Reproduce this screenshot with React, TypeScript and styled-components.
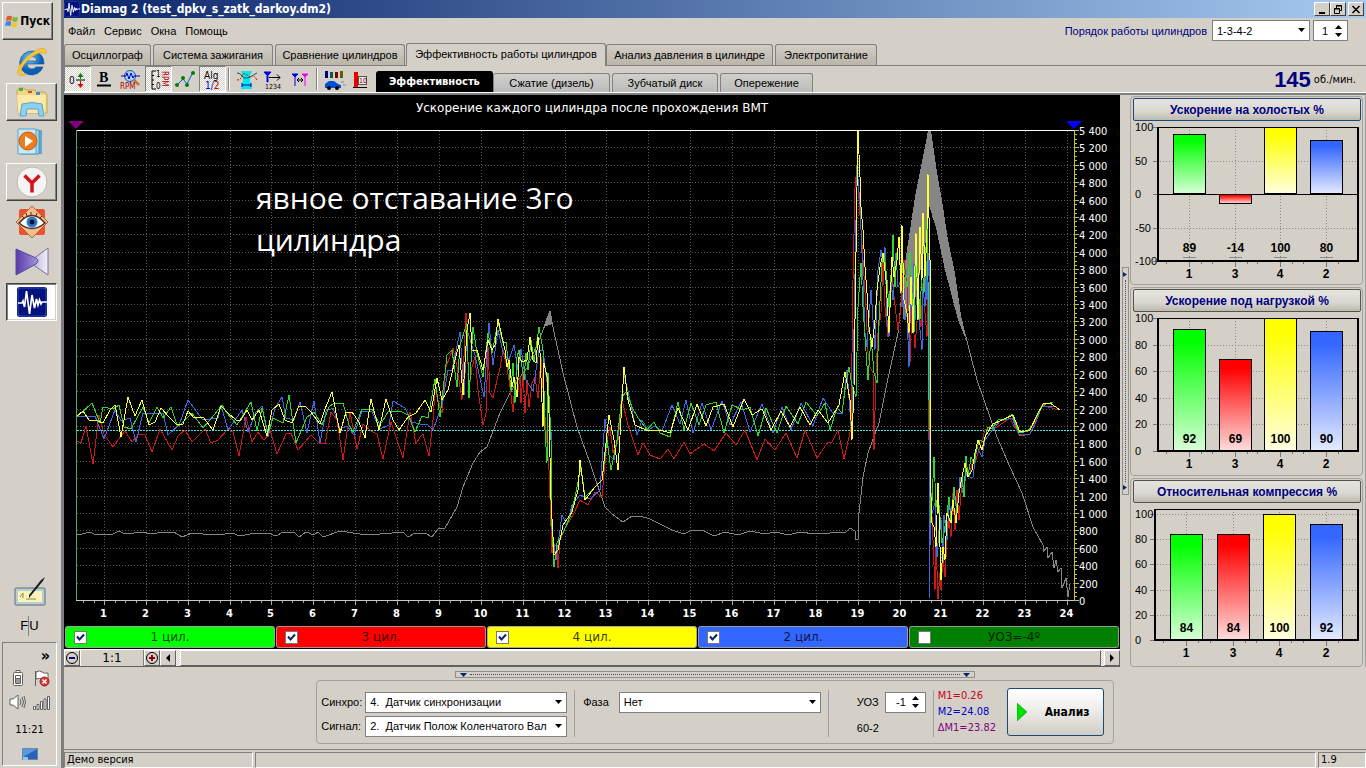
import React, { useState } from "react";
import styled, { createGlobalStyle, css } from "styled-components";

const face = "#d4d0c8";
const ui = `"DejaVu Sans Condensed", "DejaVu Sans", sans-serif`;
const wide = `"DejaVu Sans", sans-serif`;
const arial = `"Liberation Sans", sans-serif`;

const Global = createGlobalStyle`
  * { box-sizing: border-box; }
  html, body { margin: 0; padding: 0; background: ${face}; }
  body { font: 11px/14px ${arial}; color: #000; }
  button, input, select { font: inherit; color: inherit; margin: 0; }
`;

const Desktop = styled.div`
  display: grid;
  grid-template-columns: 64px minmax(0, 1fr);
  min-height: 100vh;
  background: ${face};
`;

/* ---------- task bar ---------- */
const TaskBar = styled.aside`
  display: flex;
  flex-direction: column;
  padding: 2px 4px 2px 2px;
  border-right: 3px solid #7d7d80;
`;
const StartButton = styled.button`
  display: flex;
  align-items: center;
  gap: 1px;
  width: 51px;
  height: 38px;
  padding: 0 2px;
  background: ${face};
  border: 1px solid;
  border-color: #fff #404040 #404040 #fff;
  box-shadow: inset -1px -1px #808080;
  font: bold 12px/14px ${ui};
`;
const TaskList = styled.div`
  display: flex;
  flex-direction: column;
  gap: 2px;
  margin: 3px 0 auto 4px;
`;
const TaskButton = styled.button<{ $look?: "up" | "down" }>`
  display: grid;
  place-items: center;
  height: 38px;
  padding: 0;
  background: ${(p) => (p.$look === "down" ? "#fff" : "none")};
  border: 1px solid transparent;
  ${(p) => p.$look === "up" && css`border-color: #fff #404040 #404040 #fff; box-shadow: inset -1px -1px #808080;`}
  ${(p) => p.$look === "down" && css`border-color: #404040 #fff #fff #404040; box-shadow: inset 1px 1px #808080, inset -1px -1px ${face};`}
`;
const PenBlock = styled.div`
  display: flex;
  flex-direction: column;
  align-items: center;
  gap: 9px;
  padding-bottom: 6px;
`;
const Lang = styled.span`
  height: 20px;
  font: 13px/20px ${arial};
  i { display: inline-block; width: 1px; height: 20px; background: #808080; vertical-align: top; }
`;
const Tray = styled.div`
  display: flex;
  flex-direction: column;
  align-items: center;
  height: 124px;
  padding: 4px 6px;
  border: 1px solid;
  border-color: #808080 #fff #fff #808080;
`;
const More = styled.button`
  align-self: flex-end;
  height: 18px;
  padding: 0;
  border: 0;
  background: none;
  font: bold 16px/16px ${ui};
`;
const TrayIcons = styled.div`
  display: grid;
  grid-template-columns: 18px 18px;
  gap: 6px 5px;
  margin-top: 4px;
`;
const Clock = styled.time`
  margin: 12px 0 11px;
  font: 11px/14px ${ui};
`;

/* ---------- window frame ---------- */
const Win = styled.main`
  display: flex;
  flex-direction: column;
  min-width: 0;
`;
const TitleBar = styled.header`
  display: flex;
  align-items: center;
  height: 18px;
  padding-right: 2px;
  background: linear-gradient(90deg, #0a246a, #a6caf0);
  color: #fff;
`;
const Title = styled.h1`
  flex: 1;
  margin: 0 0 0 1px;
  font: bold 12px/18px ${ui};
`;
const CaptionButton = styled.button<{ $gap?: boolean }>`
  display: grid;
  place-items: center;
  width: 16px;
  height: 14px;
  margin-left: ${(p) => (p.$gap ? 2 : 0)}px;
  padding: 0;
  background: ${face};
  border: 1px solid;
  border-color: #fff #404040 #404040 #fff;
`;
const MenuRow = styled.div`
  display: flex;
  align-items: center;
  height: 25px;
  padding: 0 18px 0 4px;
`;
const MenuItem = styled.button`
  padding: 0;
  margin-right: 9px;
  border: 0;
  background: none;
`;
const OrderLabel = styled.label`
  margin: 0 5px 0 auto;
  color: #000080;
`;

/* ---------- fields ---------- */
const SelectBox = styled.span<{ $w: number }>`
  position: relative;
  display: block;
  width: ${(p) => p.$w}px;
  height: 21px;
  svg { position: absolute; right: 5px; top: 8px; pointer-events: none; }
  select {
    width: 100%;
    height: 100%;
    padding: 0 16px 0 4px;
    appearance: none;
    border: 1px solid #808080;
    border-radius: 0;
    background: #fff;
  }
`;
const Spin = styled.span<{ $w: number }>`
  display: flex;
  width: ${(p) => p.$w}px;
  height: 21px;
  margin-left: 3px;
  background: #fff;
  border: 1px solid #808080;
  input {
    flex: 1;
    min-width: 0;
    padding: 0 1px;
    border: 0;
    background: none;
    text-align: right;
  }
`;
const SpinArrows = styled.span`
  display: flex;
  flex-direction: column;
  justify-content: center;
  gap: 4px;
  width: 18px;
  button { display: grid; place-items: center; height: 4px; padding: 0; border: 0; background: none; }
`;

/* ---------- tabs and tool bar ---------- */
const TabRow = styled.nav`
  display: flex;
  align-items: flex-end;
  gap: 2px;
  height: 23px;
  border-bottom: 1px solid #808080;
`;
const Tab = styled.button<{ $w: number; $on?: boolean }>`
  width: ${(p) => p.$w}px;
  height: ${(p) => (p.$on ? 23 : 21)}px;
  margin: ${(p) => (p.$on ? "0 -2px -1px -1px" : "0")};
  padding: ${(p) => (p.$on ? "0 0 2px" : "0")};
  border: 1px solid #808080;
  border-bottom: 0;
  border-radius: 3px 3px 0 0;
  background: ${(p) => (p.$on ? face : "linear-gradient(#d2cec6, #b9b5a9)")};
  white-space: nowrap;
`;
const ToolRow = styled.div`
  display: flex;
  height: 29px;
  border-bottom: 2px solid #808080;
  box-shadow: inset 0 -1px #fff;
`;
const Tool = styled.button<{ $on?: boolean }>`
  display: grid;
  place-items: center;
  width: 27px;
  height: 26px;
  padding: 0;
  border: 1px solid transparent;
  background: none;
  ${(p) =>
    p.$on &&
    css`
      border-color: #808080 #fff #fff #808080;
      background: repeating-conic-gradient(#fff 0 25%, ${face} 0 50%) 0 0 / 2px 2px;
    `}
`;
const Sep = styled.span`
  width: 1px;
  height: 22px;
  margin: 2px 3px;
  background: #fff;
  box-shadow: -1px 0 #808080;
`;
const SubTabs = styled.nav`
  display: flex;
  align-items: flex-end;
  gap: 2px;
  height: 26px;
  margin-left: 1px;
`;
const SubTab = styled.button<{ $w: number; $on?: boolean }>`
  width: ${(p) => p.$w}px;
  height: ${(p) => (p.$on ? 21 : 19)}px;
  margin-right: ${(p) => (p.$on ? -2 : 0)}px;
  padding: 0;
  border: 1px solid ${(p) => (p.$on ? "#000" : "#808080")};
  border-bottom: 0;
  border-radius: 3px 3px 0 0;
  background: ${(p) => (p.$on ? "#000" : "linear-gradient(#d0cfcc, #bcbcba)")};
  color: ${(p) => (p.$on ? "#fff" : "#000")};
  font: ${(p) => (p.$on ? `bold 11px/14px ${ui}` : `11px/14px ${arial}`)};
  white-space: nowrap;
`;
const Rpm = styled.p`
  display: flex;
  align-items: center;
  gap: 3px;
  margin: 0 10px 0 auto;
  font: 11px/28px ${ui};
  b { color: #000080; font: bold 22px/28px ${arial}; }
`;

/* ---------- work area ---------- */
const Work = styled.div`
  display: grid;
  grid-template-columns: minmax(0, 1fr) 10px 236px;
`;
const ScopeColumn = styled.section`
  display: flex;
  flex-direction: column;
  background: #000;
  svg.scope { display: block; width: 100%; height: auto; }
`;
const Legend = styled.div`
  display: grid;
  grid-template-columns: repeat(5, 1fr);
  gap: 1px;
  padding: 1px;
`;
const LegendItem = styled.label<{ $color: string }>`
  display: grid;
  grid-template-columns: 15px 1fr 15px;
  align-items: center;
  height: 22px;
  padding: 0 8px;
  border: 1px solid rgba(160, 160, 160, 0.9);
  border-radius: 3px;
  background: ${(p) => p.$color};
  color: rgba(0, 0, 0, 0.8);
  font: 12px/16px ${wide};
  text-align: center;
`;
const CheckWrap = styled.span`
  position: relative;
  width: 13px;
  height: 13px;
  input { display: block; width: 13px; height: 13px; appearance: none; background: #fff; border: 1px solid #777; }
  svg { position: absolute; left: 2px; top: 2px; pointer-events: none; display: none; }
  input:checked + svg { display: block; }
`;
const ZoomRow = styled.div`
  display: flex;
  height: 18px;
  background: ${face};
  border-top: 1px solid #fff;
  border-bottom: 1px solid #606060;
`;
const SmallButton = styled.button`
  display: grid;
  place-items: center;
  width: 16px;
  padding: 0;
  background: ${face};
  border: 1px solid;
  border-color: #fff #606060 #606060 #fff;
`;
const Ratio = styled.output`
  width: 64px;
  border-left: 1px solid #fff;
  border-right: 1px solid #808080;
  font: 12px/17px ${wide};
  text-align: center;
`;
const Track = styled.div`
  flex: 1;
  padding: 0 3px 0 4px;
  background: repeating-conic-gradient(#fff 0 25%, ${face} 0 50%) 0 0 / 2px 2px;
`;
const Thumb = styled.div`
  height: 100%;
  background: ${face};
  border: 1px solid;
  border-color: #fff #606060 #606060 #fff;
`;
const Gutter = styled.div`
  display: flex;
  justify-content: center;
  align-items: center;
`;
const Grip = styled.button<{ $flat?: boolean }>`
  display: flex;
  flex-direction: ${(p) => (p.$flat ? "row" : "column")};
  align-items: center;
  width: ${(p) => (p.$flat ? "40%" : "7px")};
  height: ${(p) => (p.$flat ? "7px" : "228px")};
  padding: ${(p) => (p.$flat ? "0 4px" : "4px 0")};
  border: 1px solid #909090;
  background: ${face};
  svg { fill: #0a246a; }
`;
const Dots = styled.i<{ $flat?: boolean }>`
  flex: 1;
  margin: 3px;
  border: 0 dotted #444a66;
  border-width: ${(p) => (p.$flat ? "1px 0 0" : "0 0 0 1px")};
`;
const Panels = styled.aside`
  display: flex;
  flex-direction: column;
  gap: 2px;
  padding: 1px 2px 0 0;
  border-right: 1px solid #a0a0a0;
`;
const Panel = styled.section`
  height: 189px;
  padding: 1px 1px 0 2px;
  border: 1px solid #a5a29b;
  border-radius: 4px;
  svg { display: block; width: 100%; height: 160px; }
`;
const PanelButton = styled.button<{ $focus?: boolean }>`
  display: block;
  width: 100%;
  height: 23px;
  padding: 0;
  border: 1px solid ${(p) => (p.$focus ? "#1c4a78" : "#55534c")};
  border-radius: 2px;
  background: linear-gradient(#e6e4df, #dad7d0 60%, #bdbab0);
  color: #000080;
  font: bold 12px/14px ${arial};
`;

/* ---------- bottom ---------- */
const Bottom = styled.section`
  display: flex;
  flex-direction: column;
  align-items: center;
  flex: 1;
  padding: 4px 0 5px;
  border-bottom: 1px solid #808080;
`;
const Setup = styled.form`
  display: flex;
  align-items: stretch;
  height: 64px;
  margin: 2px 0 0;
  padding: 6px 9px 6px 4px;
  border: 1px solid #a5a29b;
  border-radius: 4px;
`;
const Fields = styled.div`
  display: grid;
  grid-template-columns: 42px auto;
  gap: 3px 2px;
  align-items: center;
  align-content: center;
  padding-top: 4px;
`;
const Rule = styled.span`
  width: 1px;
  margin: 3px 4px 0 7px;
  background: #a0a0a0;
`;
const Phase = styled.div`
  display: flex;
  align-items: center;
  gap: 10px;
  height: 30px;
  margin-left: 4px;
`;
const Angle = styled.div`
  display: grid;
  grid-template-columns: 25px 44px;
  grid-template-rows: 30px 22px;
  align-items: center;
  margin-left: 24px;
`;
const Marks = styled.div`
  width: 62px;
  padding-top: 1px;
  font: 11px/16px ${ui};
  white-space: nowrap;
`;
const Mark = styled.div<{ $c: string }>`
  color: ${(p) => p.$c};
`;
const Analyse = styled.button`
  display: flex;
  align-items: center;
  gap: 18px;
  width: 97px;
  height: 48px;
  margin: 1px 0 0 7px;
  padding: 0 9px;
  border: 1px solid #1c4a78;
  border-radius: 3px;
  background: linear-gradient(#fff, #f1efec 40%, #d0cdc5);
  font: bold 12px/14px ${ui};
`;
const Status = styled.footer`
  display: grid;
  grid-template-columns: 189px 1fr 48px;
  gap: 2px;
  height: 18px;
  padding-top: 2px;
  font: 11px/14px ${ui};
  span { padding-left: 2px; border: 1px solid; border-color: #808080 #fff #fff #808080; }
`;

/* ---------- small glyphs ---------- */
const Down = () => (
  <svg width="7" height="4" viewBox="0 0 7 4"><path d="M0 0h7L3.500 4z" /></svg>
);
const Up = () => (
  <svg width="7" height="4" viewBox="0 0 7 4"><path d="M0 4h7L3.500 0z" /></svg>
);
const Tick = () => (
  <svg width="9" height="9" viewBox="0 0 9 9"><path d="M1 3.500l2.500 3L8 1.500" fill="none" stroke="#0a246a" strokeWidth="2" /></svg>
);
const WaveLogo = ({ size }: { size: number }) => (
  <svg width={size} height={size} viewBox="0 0 30 30">
    <rect width="30" height="30" rx="3" fill="#05127e" />
    <rect x="1" y="1" width="28" height="28" rx="3" fill="none" stroke="#2b4fb4" />
    <path d="M1 16h4l1-2 1.500 6 2-16 3 23 2.500-19 2.500 13 2-9 1.500 6 1.500-5 1.500 4 1-2h5" fill="none" stroke="#fff" strokeWidth="1.700" />
  </svg>
);

function TaskIcon({ name }: { name: string }) {
  switch (name) {
    case "ie":
      return (
        <svg width="34" height="32" viewBox="0 0 34 32">
          <defs><radialGradient id="ie" cx=".4" cy=".3"><stop offset="0" stopColor="#6fd0ff" /><stop offset="1" stopColor="#0a5fb4" /></radialGradient></defs>
          <path d="M17 5a12 12 0 1 0 11 16h-7a5 5 0 0 1-9-3h17c0-8-5-13-12-13zm-5 10c1-6 9-6 10 0z" fill="url(#ie)" stroke="#0a4c92" strokeWidth=".6" />
          <path d="M31 8c2-5-3-8-11-3C8 12-1 25 4 29c3 2 8-1 8-1-5 1-7-1-5-6C11 14 24 3 31 8z" fill="#f5c63a" stroke="#d79a1c" strokeWidth=".5" />
        </svg>
      );
    case "folder":
      return (
        <svg width="34" height="30" viewBox="0 0 34 30">
          <path d="M2 4l2-3h5l2 2h9l1 2h9l2 3v18H3z" fill="#f2d880" stroke="#c8a548" />
          <path d="M4 1h4v3H4z" fill="#43b04a" /><path d="M13 4h4v2h-4z" fill="#c84a3a" /><path d="M21 5h4v3h-4z" fill="#4a86d8" />
          <path d="M2 8h29l-1 18H3z" fill="#fbe9a8" />
          <path d="M5 29l2-12q10-3 20 0l2 12h-5l-1-7H12l-1 7z" fill="#8fd0ee" stroke="#5ba4d4" />
        </svg>
      );
    case "media":
      return (
        <svg width="30" height="28" viewBox="0 0 30 28">
          <path d="M7 2h18v24H7z" fill="#5fa9cf" /><path d="M4 2h18v24H4z" fill="#a7d9ee" stroke="#4c93bb" />
          <path d="M1 1h18v25H1z" fill="#c7e9f6" stroke="#5aa2c8" />
          <circle cx="11" cy="13" r="9" fill="#ee7c1f" stroke="#c85a10" /><path d="M8 8l8 5-8 6z" fill="#fff" />
        </svg>
      );
    case "yandex":
      return (
        <svg width="32" height="32" viewBox="0 0 32 32">
          <circle cx="16" cy="16" r="15" fill="#f4f4f4" stroke="#b8b8b8" />
          <path d="M8.500 9.500L16 17m7.500-7.500L16 17v9.500" stroke="#d8121c" strokeWidth="3.500" fill="none" />
        </svg>
      );
    case "eye":
      return (
        <svg width="34" height="34" viewBox="0 0 34 34">
          <rect x="4" y="4" width="26" height="26" rx="2" fill="#f0502c" />
          <path d="M17 1l16 16-16 16L1 17z" fill="#f0bd8e" stroke="#a8643c" />
          <path d="M4 18q13-15 26 0-13 11-26 0z" fill="#fff" stroke="#5c2c14" strokeWidth="1.500" />
          <circle cx="17" cy="17" r="5.500" fill="#2a7ad0" /><circle cx="17" cy="17" r="2.500" fill="#051428" />
          <path d="M7 11l2 2m2-5l1 3m4-4v3m6-2l-1 3m6 0l-2 2" stroke="#5c2c14" />
        </svg>
      );
    case "kite":
      return (
        <svg width="34" height="30" viewBox="0 0 34 30">
          <defs>
            <linearGradient id="k1"><stop offset="0" stopColor="#5a3aa8" /><stop offset="1" stopColor="#a394dc" /></linearGradient>
            <linearGradient id="k2"><stop offset="0" stopColor="#b4a8d4" /><stop offset="1" stopColor="#f2f0f8" /></linearGradient>
          </defs>
          <path d="M33 1v27L14 15z" fill="url(#k2)" stroke="#7a70a0" /><path d="M1 2l20 9q4 3 0 6L1 28z" fill="url(#k1)" stroke="#5a48a0" />
        </svg>
      );
    case "pen":
      return (
        <svg width="32" height="30" viewBox="0 0 32 30">
          <rect x="1" y="11" width="30" height="17" rx="1" fill="#b9cdd2" stroke="#5b7078" /><rect x="4" y="14" width="24" height="11" fill="#fbf3b8" />
          <path d="M6 20l3-4v5m3 1h10" stroke="#884" fill="none" /><path d="M15 21L29 4l2-4-4 3-12 15z" fill="#1c2228" />
        </svg>
      );
    default:
      return <WaveLogo size={30} />;
  }
}

const WinFlag = () => (
  <svg width="16" height="15" viewBox="0 0 16 15">
    <path d="M2 2q3-2 6 0L7 7Q4 5 1 7z" fill="#e8582a" /><path d="M9 2q3 2 6 0l-1 5q-3 2-6 0z" fill="#7cb93c" />
    <path d="M1 8q3-2 6 0l-1 5q-3-2-6 0z" fill="#3e86d8" /><path d="M8 8q3 2 6 0l-1 5q-3 2-6 0z" fill="#f5c42c" />
  </svg>
);

const TrayGlyph = ({ name }: { name: string }) => (
  <svg width="18" height="18" viewBox="0 0 18 18" fill="none" stroke="#606060">
    {name === "battery" && <><rect x="4.500" y="3.500" width="9" height="13" rx="1" fill="#fff" /><path d="M7 1.500h4v2H7z" fill="#fff" /><path d="M6.500 6.500h5v3h-5z" fill="#fff" /><path d="M6.500 9.500h5v5h-5z" fill="#999" /></>}
    {name === "flag" && <><path d="M3.500 2v15M4 3q4-2 6 0t6 1v7q-4 0-6-1t-6 0z" fill="#fff" /><circle cx="12.500" cy="12.500" r="4.500" fill="#d83a34" stroke="#a02020" /><path d="M10.500 10.500l4 4m0-4l-4 4" stroke="#fff" strokeWidth="1.500" /></>}
    {name === "sound" && <><path d="M1 6h3l5-4v14l-5-4H1z" fill="#fff" /><path d="M11 6q2 3 0 6m2-8q3 5 0 10m2-11q3 6 0 12" /></>}
    {name === "net" && <path d="M1.500 13.500h2v3h-2zM5 11.500h2v5H5zM8.500 8.500h2v8h-2zM12 6h2v10.500h-2zM15.500 3.500h2v13h-2z" fill="#fff" />}
  </svg>
);

function ToolIcon({ n }: { n: number }) {
  const t = { fontFamily: "DejaVu Sans Condensed, DejaVu Sans, sans-serif" };
  return (
    <svg width="25" height="24" viewBox="0 -1 25 24" style={t}>
      {n === 0 && <><text x="4" y="16" fontSize="10">0</text><path d="M11 12h9" stroke="#000" /><path d="M15.500 5l3 4h-6zM15 8h1v3h-1z" fill="#008000" /><path d="M15.500 20l3-4h-6zM15 13h1v3h-1z" fill="#e00000" /></>}
      {n === 1 && <><text x="7" y="14" fontSize="14" fontWeight="bold" fontFamily="Liberation Serif">B</text><path d="M5 17.500h14" stroke="#000" strokeWidth="2" /></>}
      {n === 2 && <><circle cx="11" cy="8" r="5.500" fill="#9fd4f4" stroke="#2850a0" /><path d="M2 8h5l1-3 2 6 2-6 2 5 1-2h6" fill="none" stroke="#0000c0" /><path d="M15 12l5 5" stroke="#b08030" strokeWidth="2.500" /><text x="1" y="21" fontSize="8" fill="#b00000">RPM</text></>}
      {n === 3 && <><path d="M10 3H6v18h4M6 7.500h2M6 12h2M6 16.500h2" fill="none" stroke="#000" /><text x="10" y="9" fontSize="8">1</text><text x="10" y="21" fontSize="8">0</text><text transform="translate(16 3) rotate(90)" fontSize="8" fill="#b00000">RPM</text></>}
      {n === 4 && <><path d="M4 17l6-6 4 5 5-10" fill="none" stroke="#0060c0" /><g fill="#008000"><circle cx="4" cy="17" r="2" /><circle cx="10" cy="10" r="2" /><circle cx="14" cy="17" r="2" /><circle cx="20" cy="5" r="2" /></g></>}
      {n === 5 && <><text x="4" y="11" fontSize="10">Alg</text><text x="5" y="21" fontSize="10" fill="#0000c0">1/<tspan fill="#d00000">2</tspan></text></>}
      {n === 6 && <><path d="M7 3h11l-2 5v5l2 8H7l2-8V8z" fill="#00e8e8" /><path d="M3 5q4 0 5 3t5 2 5-2 5-3" fill="none" stroke="#006060" /><path d="M3 12q4 0 5-4t5-1 5 1 5 4" fill="none" stroke="#e00000" strokeDasharray="2 1" /><path d="M8 17h9m-9-2v4m9-4v4" stroke="#0000c0" /></>}
      {n === 7 && <><path d="M3 4h7L6.500 8zM6 8h1v6H6z" fill="#0000e0" stroke="#0000e0" /><path d="M8 9.500h11m-3-3l3 3-3 3" fill="none" stroke="#000" /><text x="4" y="21" fontSize="7">1234</text></>}
      {n === 8 && <><path d="M4 6h6L7 9zM7 9v9" fill="#0000e0" stroke="#0000e0" /><path d="M14 6h6l-3 3zM17 9v9" fill="#f000f0" stroke="#f000f0" /><path d="M9 12h6m-4-2l-2 2 2 2m2-4l2 2-2 2" fill="none" stroke="#000" /></>}
      {n === 9 && <><path d="M3 3h3v7H3z" fill="#000080" /><path d="M8 4h3v6H8z" fill="#006040" /><path d="M13 4h3v6h-3z" fill="#800000" /><path d="M18 3h3v7h-3z" fill="#606000" /><path d="M3 16l4-3h5l4 3 3 1v3H3z" fill="#0050d8" /><circle cx="7" cy="20" r="2" /><circle cx="15" cy="20" r="2" /><path d="M19 14h3m-1 3h3" stroke="#888" /></>}
      {n === 10 && <><path d="M5 4h4v15H5z" fill="#e80000" /><rect x="9.500" y="8.500" width="8" height="8" fill="#eee" stroke="#555" /><path d="M4 19.500h14" stroke="#000" /><text x="10" y="15" fontSize="7" fill="#700">10</text></>}
    </svg>
  );
}

/* ---------- scope ---------- */
const GREEN =
  "77,417 92,403 100,423 103,407 113,409 119,405 124,427 131,429 143,407 149,423 157,407 163,418 171,407 177,425 180,425 192,413 203,428 210,420 222,405 227,413 237,425 251,402 257,431 262,408 268,433 273,418 283,423 289,395 296,443 307,417 314,412 322,425 329,407 334,403 343,403 349,425 353,432 362,409 372,409 380,425 388,412 400,411 408,415 415,432 422,416 428,418 435,379 440,417 447,355 452,350 457,387 460,345 467,323 469,398 473,327 477,353 483,377 488,333 492,353 498,322 503,343 506,342 508,360 511,390 513,363 515,403 517,357 519,350 522,367 524,380 526,353 528,370 531,340 534,362 539,327 543,350 545,430 547,463 548,373 551,440 552,527 554,567 557,543 563,533 570,517 575,497 581,467 585,497 595,487 602,480 607,440 611,470 617,440 622,397 626,392 632,407 638,418 647,430 654,422 660,433 670,437 678,402 684,430 691,403 699,425 706,405 716,402 724,433 732,405 743,410 750,407 758,436 766,408 777,433 786,406 798,424 806,402 817,416 825,403 830,430 837,408 842,413 846,383 849,367 852,386 856,397 858,307 861,263 863,307 865,337 868,380 871,337 874,373 877,383 879,320 882,263 884,253 887,280 889,307 892,260 893,235 895,287 897,253 899,243 901,283 903,263 907,287 910,253 912,293 914,333 916,250 918,277 920,320 922,263 924,293 926,247 927,220 928,280 929,400 930,430 931,523 934,457 936,507 938,493 940,517 942,543 944,533 947,513 949,497 951,523 954,487 957,513 959,493 962,477 964,497 966,456 968,477 971,457 974,463 977,447 980,440 984,442 988,427 992,429 998,420 1006,419 1012,414 1019,433 1028,431 1034,422 1043,405 1053,402";
const RED =
  "77,441 81,443 86,426 93,464 99,415 104,434 113,447 125,431 132,442 139,434 145,435 152,452 160,429 172,450 178,436 185,430 192,442 205,429 211,443 218,440 228,429 233,432 239,456 246,417 252,442 258,432 264,440 268,435 270,430 277,454 286,434 291,433 298,450 311,435 319,443 325,444 331,412 337,420 343,460 350,412 357,449 363,424 371,431 377,434 383,459 391,422 403,458 410,412 416,444 420,437 423,434 429,456 433,420 435,390 442,413 446,367 453,348 457,367 462,400 466,313 469,390 472,367 475,357 478,390 483,425 486,413 488,347 490,393 493,398 497,380 500,368 503,350 507,367 510,387 513,412 515,380 517,397 520,377 521,403 523,373 525,413 527,380 529,407 532,383 535,377 538,398 541,357 544,403 547,443 549,470 552,553 553,543 557,547 558,568 560,540 564,530 573,515 580,500 588,505 595,492 602,497 607,440 610,427 613,453 618,440 622,400 628,425 638,455 643,443 650,455 660,459 668,449 674,459 684,442 690,454 704,444 714,451 726,433 736,445 745,430 757,460 765,439 775,450 786,433 797,458 805,430 817,458 828,442 832,442 838,430 844,459 851,428 853,280 855,188 857,167 861,230 863,260 866,307 868,353 870,367 873,373 874,450 876,373 878,333 881,313 883,263 885,307 888,337 892,277 894,297 898,330 901,307 904,260 907,287 910,363 912,307 915,348 918,307 921,327 923,283 925,313 927,337 928,293 929,440 931,493 933,540 935,590 936,540 938,599 940,573 941,590 943,557 945,577 947,537 949,520 951,537 953,493 955,530 957,490 959,520 962,480 964,487 967,467 969,477 973,460 975,463 979,450 985,430 997,427 1010,418 1019,435 1030,434 1042,405 1058,410";
const BLUE =
  "77,417 95,416 104,439 115,410 121,421 130,418 136,442 143,413 163,413 168,435 179,425 188,400 203,420 218,418 221,405 228,430 242,410 248,432 256,412 262,406 268,437 275,408 282,397 286,418 294,420 300,402 307,433 314,401 320,443 326,411 333,408 340,429 347,426 354,435 362,411 372,412 380,429 389,425 393,401 405,408 412,422 420,424 427,424 433,430 442,405 448,370 452,370 460,332 464,395 467,330 475,355 484,397 489,323 493,365 498,330 503,352 509,360 514,345 518,370 521,349 526,380 533,391 539,350 543,350 548,390 551,430 552,530 556,560 562,515 567,525 572,505 580,495 590,499 600,490 605,419 609,455 614,460 618,435 624,374 630,400 637,435 642,420 648,430 655,426 662,431 672,405 680,424 686,400 693,433 702,403 711,430 722,401 730,425 741,402 750,432 762,404 773,433 782,407 791,430 801,403 813,426 823,398 832,412 842,414 847,370 852,440 857,165 860,205 862,253 865,333 867,347 871,290 875,350 878,270 881,250 883,263 885,247 887,320 889,337 891,280 893,300 896,253 898,287 901,280 903,307 904,287 905,320 907,313 909,367 911,280 912,307 914,263 915,320 917,290 919,320 922,350 923,287 925,307 926,260 927,300 929,253 929,598 931,493 932,513 935,503 937,557 939,530 941,520 943,563 944,515 947,540 949,503 951,513 954,493 957,513 960,477 963,493 967,470 970,477 973,477 977,447 982,457 985,440 990,433 1000,421 1012,418 1020,436 1030,434 1036,422 1042,406 1055,407";
const YELLOW =
  "77,416 83,411 89,420 98,421 103,423 110,410 115,405 121,437 128,397 135,416 142,400 149,425 155,422 161,408 169,417 177,425 183,424 188,411 194,418 203,417 213,430 221,406 228,413 236,420 240,421 247,410 252,420 259,410 267,436 272,410 279,404 285,420 292,423 299,406 305,406 310,411 320,424 325,409 332,392 340,433 346,412 352,412 359,422 365,438 371,399 379,430 386,399 393,420 399,430 408,417 416,413 425,400 431,412 437,378 442,400 448,390 455,360 459,345 463,395 467,330 470,313 472,350 477,350 483,370 488,340 492,350 495,345 498,319 505,350 507,367 509,360 512,387 514,377 517,397 519,357 522,362 527,360 530,337 533,360 536,363 538,337 540,353 543,427 544,363 547,377 549,413 551,500 554,555 558,550 563,525 572,512 578,490 580,460 585,500 595,487 602,480 609,415 614,440 618,470 624,367 628,400 635,425 648,431 660,430 670,433 678,408 688,430 697,404 706,426 713,407 724,404 733,427 744,399 752,415 762,409 771,430 781,411 790,427 800,407 810,425 818,410 828,423 839,405 845,372 850,400 852,440 854,387 857,187 858,131 860,177 861,207 863,230 865,267 867,293 869,327 872,347 875,320 877,290 880,267 883,253 886,280 889,333 892,257 894,277 897,260 899,237 901,293 902,225 904,300 907,313 909,333 911,277 913,333 916,233 918,320 920,227 922,280 923,213 925,277 927,230 928,174 930,260 930,470 932,523 934,527 936,547 938,483 939,513 941,580 943,547 945,560 947,513 951,523 953,500 956,523 959,493 962,477 965,463 968,477 972,470 975,453 978,440 982,450 985,437 989,430 993,424 1002,420 1013,415 1020,432 1030,430 1037,415 1043,404 1050,403 1060,410";
const GRAY =
  "77,535 91,532 95,535 113,534 119,531 125,534 143,532 150,534 165,532 174,532 182,537 192,533 203,534 225,534 232,533 240,536 250,534 268,533 276,536 283,532 295,533 299,537 306,532 314,535 318,532 323,537 340,531 360,534 380,534 392,533 403,532 408,537 415,533 425,533 432,537 438,529 445,528 457,507 463,487 473,463 480,452 487,447 500,413 510,393 520,377 527,368 542,333 550,311 554,332 563,373 577,427 590,463 605,507 612,514 623,522 632,516 640,516 650,519 660,524 672,530 684,534 692,530 704,531 714,536 725,532 738,535 750,531 765,534 776,532 788,535 800,532 815,534 830,533 846,532 850,528 855,531 856,540 858,539 859,513 863,477 868,453 879,423 887,383 898,333 905,263";
const GRAY_TAIL =
  "961,318 977,380 990,417 997,437 1010,467 1022,493 1033,527 1043,545 1043,552 1047,547 1048,558 1052,552 1054,568 1056,560 1058,572 1061,568 1062,588 1066,578 1068,597 1070,584";

const yTicks = Array.from({ length: 28 }, (_, i) => i * 200);
const xTicks = Array.from({ length: 24 }, (_, i) => i + 1);
const px = (v: number) => Math.round(104 + ((v - 1) * 963) / 23) + 0.5;
const py = (v: number) => Math.round(600 - (v * 470) / 5400) + 0.5;
const spaced = (v: number) => (v >= 1000 ? `${Math.floor(v / 1000)} ${String(v % 1000).padStart(3, "0")}` : String(v));

function Scope() {
  return (
    <svg className="scope" viewBox="64 95 1056 530" role="img" aria-label="Ускорение каждого цилиндра">
      <text x="592" y="112" textAnchor="middle" fill="#fff" fontSize="12" fontFamily="DejaVu Sans">
        Ускорение каждого цилиндра после прохождения ВМТ
      </text>
      <path d="M68 121h16l-8 8z" fill="#800080" />
      <path d="M1066 121h16l-8 8z" fill="#00f" />
      <g stroke="#5c5c5c" strokeDasharray="1 2" shapeRendering="crispEdges">
        {yTicks.slice(1, 27).map((v) => <path key={v} d={`M77 ${py(v)}H1074`} />)}
        {xTicks.map((v) => <path key={v} d={`M${px(v)} 131V600`} />)}
      </g>
      <g fill="none" strokeWidth="1" shapeRendering="crispEdges">
        <path d="M903 320L905 263 915 197 928 131H931L937 172 943 207 948 240 955 273 961 315 966 340 958 320 945 270 936 228 929 205 926 240 915 300z" fill="#868686" />
        <path d="M541 336l5-17 4-9 5 24-3-10-8 3z" fill="#868686" />
        <polyline points={GRAY} stroke="#868686" />
        <polyline points={GRAY_TAIL} stroke="#868686" />
        <path d="M77 430.500H1074" stroke="#40e8e8" strokeDasharray="2 1" />
        <polyline points={RED} stroke="#d01818" />
        <polyline points={BLUE} stroke="#4169e1" />
        <polyline points={GREEN} stroke="#2fd82f" />
        <polyline points={YELLOW} stroke="#ffff38" />
        <path d="M77 130.500H1074" stroke="#fff" />
        <path d="M76.500 130V601" stroke="#4fb04f" />
        <path d="M76 600.500H1075" stroke="#c8c8c8" />
        <path d="M1074.500 130V601" stroke="#c8c040" />
        {yTicks.map((v) => (
          <path key={v} d={`M1075 ${py(v)}h4${v ? `M1075 ${py(v) + 4}h2M1075 ${py(v) + 9}h2M1075 ${py(v) + 13}h2` : ""}`} stroke="#c8c040" />
        ))}
        {xTicks.map((v) => (
          <path key={v} d={`M${px(v)} 601v4M${px(v) - 21} 601v2M${px(v) - 10} 601v2${v < 24 ? `M${px(v) + 11} 601v2` : ""}`} stroke="#aaa" />
        ))}
      </g>
      <g fill="#fff" fontSize="11" fontFamily="DejaVu Sans Condensed">
        {yTicks.map((v) => <text key={v} x="1079" y={py(v) + 4}>{spaced(v)}</text>)}
      </g>
      <g fill="#fff" fontSize="11" fontWeight="bold" fontFamily="DejaVu Sans Condensed" textAnchor="middle">
        {xTicks.map((v) => <text key={v} x={px(v) - 1} y="617">{v}</text>)}
      </g>
      <g fill="#fff" fontSize="30" fontFamily="Open Sans, Noto Sans, sans-serif">
        <text x="256" y="209">явное отставание 3го</text>
        <text x="256" y="251">цилиндра</text>
      </g>
    </svg>
  );
}

/* ---------- bar panels ---------- */
const COLORS = [["#00ff00", "#d8ffd8"], ["#ff0000", "#ffdcdc"], ["#ffff00", "#ffffe0"], ["#3366ff", "#e4eaff"]];
type BarProps = { id: string; values: number[]; min: number; step: number; left: number; top: number; bottom: number; full: number; centers: number[] };

function Bars({ id, values, min, step, left, top, bottom, full, centers }: BarProps) {
  const y = (v: number) => Math.round(bottom - ((v - min) / (100 - min)) * (bottom - full));
  const ticks: number[] = [];
  for (let v = min; v <= 100; v += step) ticks.push(v);
  return (
    <svg viewBox="1133 121 228 160" fontFamily="Liberation Sans" shapeRendering="crispEdges">
      <defs>
        {COLORS.map(([from, to], i) => (
          <linearGradient key={from} id={`${id}${i}`} x1="0" y1="0" x2="0" y2="1">
            <stop offset=".1" stopColor={from} /><stop offset="1" stopColor={to} />
          </linearGradient>
        ))}
      </defs>
      <g stroke="#8a8a8a" strokeDasharray="1 2">
        {ticks.map((v) => <path key={v} d={`M${left} ${y(v) + 0.5}H1358`} />)}
        {centers.map((c) => <path key={c} d={`M${c + 0.5} ${top}V${bottom}`} />)}
      </g>
      <path d={`M${left} ${top + 0.5}H1358`} stroke="#000" />
      <path d={`M${left + 1} ${top}V${bottom + 1}M1358 ${top}V${bottom + 1}`} stroke="#000" strokeWidth="2" />
      <path d={`M${left} ${bottom}H1359`} stroke="#000" strokeWidth="2" />
      {min < 0 && <path d={`M${left} ${y(0) + 0.5}H1358`} stroke="#000" />}
      {ticks.map((v) => (
        <g key={v}>
          <path d={`M${left - 4} ${y(v) + 0.5}h4`} stroke="#777" />
          <text x="1135" y={y(v) + 4} fontSize="11">{v}</text>
        </g>
      ))}
      {values.map((v, i) => {
        const a = Math.min(y(v), y(0));
        return (
          <g key={i}>
            <rect x={centers[i] - 15.5} y={a + 0.5} width="32" height={Math.abs(y(v) - y(0)) - (v > 0 ? 1 : 0)} fill={`url(#${id}${i})`} stroke="#000" />
            <path d={`M${centers[i] + 0.5} ${bottom + 1}v5M${centers[i] - 22.5} ${bottom + 1}v2M${centers[i] + 12.5} ${bottom + 1}v2`} stroke="#777" />
            {min < 0 && <path d={`M${centers[i] - 6} ${bottom - 3.5}h13`} stroke="#888" />}
            <text x={centers[i] + 0.5} y={bottom - (min < 0 ? 9 : 8)} fontSize="12" fontWeight="bold" textAnchor="middle">{v}</text>
            <text x={centers[i]} y={bottom + 17} fontSize="12" fontWeight="bold" textAnchor="middle">{[1, 3, 4, 2][i]}</text>
          </g>
        );
      })}
    </svg>
  );
}

const LEGEND = [
  ["1 цил.", "#00ff00", true],
  ["3 цил.", "#ff0000", true],
  ["4 цил.", "#ffff00", true],
  ["2 цил.", "#3366ff", true],
  ["УОЗ=-4º", "#008000", false],
] as const;

const MAIN_TABS = [
  ["Осциллограф", 87], ["Система зажигания", 120], ["Сравнение цилиндров", 130],
  ["Эффективность работы цилиндров", 200], ["Анализ давления в цилиндре", 167], ["Электропитание", 102],
] as const;

function LegendEntry({ text, color, initial }: { text: string; color: string; initial: boolean }) {
  const [on, setOn] = useState(initial);
  return (
    <LegendItem $color={color}>
      <CheckWrap>
        <input type="checkbox" checked={on} onChange={() => setOn(!on)} />
        <Tick />
      </CheckWrap>
      <span>{text}</span>
    </LegendItem>
  );
}

function Combo({ id, w, value }: { id: string; w: number; value: string }) {
  return (
    <SelectBox $w={w}>
      <select id={id} defaultValue={value}><option value={value}>{value}</option></select>
      <Down />
    </SelectBox>
  );
}

function Spinner({ id, w, value, label }: { id: string; w: number; value: string; label: string }) {
  return (
    <Spin $w={w}>
      <input id={id} defaultValue={value} aria-label={label} />
      <SpinArrows>
        <button type="button" aria-label="Больше"><Up /></button>
        <button type="button" aria-label="Меньше"><Down /></button>
      </SpinArrows>
    </Spin>
  );
}

const Side = () => (
  <svg width="4" height="5" viewBox="0 0 4 5"><path d="M0 0l4 2.500L0 5z" /></svg>
);

export default function App() {
  const common = [1189, 1235, 1280, 1326];
  return (
    <>
      <Global />
      <Desktop>
        <TaskBar>
          <StartButton><WinFlag />Пуск</StartButton>
          <TaskList>
            <TaskButton aria-label="Internet Explorer"><TaskIcon name="ie" /></TaskButton>
            <TaskButton aria-label="Проводник" $look="up"><TaskIcon name="folder" /></TaskButton>
            <TaskButton aria-label="Media Player"><TaskIcon name="media" /></TaskButton>
            <TaskButton aria-label="Яндекс" $look="up"><TaskIcon name="yandex" /></TaskButton>
            <TaskButton aria-label="FastStone"><TaskIcon name="eye" /></TaskButton>
            <TaskButton aria-label="Плеер"><TaskIcon name="kite" /></TaskButton>
            <TaskButton aria-label="Diamag 2" $look="down"><TaskIcon name="diamag" /></TaskButton>
          </TaskList>
          <PenBlock>
            <TaskIcon name="pen" />
            <Lang>F<i />U</Lang>
          </PenBlock>
          <Tray>
            <More>»</More>
            <TrayIcons>
              <TrayGlyph name="battery" /><TrayGlyph name="flag" /><TrayGlyph name="sound" /><TrayGlyph name="net" />
            </TrayIcons>
            <Clock>11:21</Clock>
            <svg width="16" height="13" viewBox="0 0 16 13"><rect x=".5" y=".5" width="15" height="11" fill="#2a62b8" stroke="#6a88a8" /><path d="M1 1h14L1 9z" fill="#5a9ae0" /><path d="M1 9h5v3H1z" fill="#8cd" /></svg>
          </Tray>
        </TaskBar>

        <Win>
          <TitleBar>
            <WaveLogo size={16} />
            <Title>Diamag 2 (test_dpkv_s_zatk_darkoy.dm2)</Title>
            <CaptionButton aria-label="Свернуть"><svg width="10" height="9"><path d="M2 7h6v2H2z" /></svg></CaptionButton>
            <CaptionButton aria-label="Восстановить"><svg width="10" height="9" fill="none" stroke="#000"><path d="M3.500 3V.5h5v5H7M3 1h6M1.500 3.500h5v5h-5zM1 4h6" /></svg></CaptionButton>
            <CaptionButton aria-label="Закрыть" $gap><svg width="10" height="9"><path d="M1.500 1l7 7m0-7l-7 7" stroke="#000" strokeWidth="1.500" /></svg></CaptionButton>
          </TitleBar>
          <MenuRow>
            {["Файл", "Сервис", "Окна", "Помощь"].map((m) => <MenuItem key={m}>{m}</MenuItem>)}
            <OrderLabel htmlFor="order">Порядок работы цилиндров</OrderLabel>
            <Combo id="order" w={98} value="1-3-4-2" />
            <Spinner id="num" w={35} value="1" label="Номер" />
          </MenuRow>
          <TabRow>
            {MAIN_TABS.map(([t, w], i) => <Tab key={t} $w={w} $on={i === 3}>{t}</Tab>)}
          </TabRow>
          <ToolRow>
            {[0, 1, 2, 3, 4, 5].map((n) => <Tool key={n} $on={n === 0 || n === 3 || n === 5} aria-label={`Режим ${n + 1}`}><ToolIcon n={n} /></Tool>)}
            <Sep />
            {[6, 7, 8].map((n) => <Tool key={n} aria-label={`Режим ${n + 1}`}><ToolIcon n={n} /></Tool>)}
            <Sep />
            {[9, 10].map((n) => <Tool key={n} aria-label={`Режим ${n + 1}`}><ToolIcon n={n} /></Tool>)}
            <SubTabs>
              <SubTab $w={117} $on>Эффективность</SubTab>
              <SubTab $w={117}>Сжатие (дизель)</SubTab>
              <SubTab $w={106}>Зубчатый диск</SubTab>
              <SubTab $w={93}>Опережение</SubTab>
            </SubTabs>
            <Rpm><b>145</b>об./мин.</Rpm>
          </ToolRow>

          <Work>
            <ScopeColumn>
              <Scope />
              <Legend>
                {LEGEND.map(([t, c, on]) => <LegendEntry key={t} text={t} color={c} initial={on} />)}
              </Legend>
              <ZoomRow>
                <SmallButton aria-label="Уменьшить"><svg width="14" height="14" viewBox="0 0 14 14"><circle cx="7" cy="7" r="5.500" fill="none" stroke="#000" /><path d="M4 7h6" stroke="#00007c" strokeWidth="2" /></svg></SmallButton>
                <Ratio>1:1</Ratio>
                <SmallButton aria-label="Увеличить"><svg width="14" height="14" viewBox="0 0 14 14"><circle cx="7" cy="7" r="5.500" fill="none" stroke="#000" /><path d="M4 7h6M7 4v6" stroke="#900010" strokeWidth="2" /></svg></SmallButton>
                <SmallButton aria-label="Влево"><svg width="4" height="8"><path d="M4 0v8L0 4z" /></svg></SmallButton>
                <Track><Thumb /></Track>
                <SmallButton aria-label="Вправо"><svg width="4" height="8"><path d="M0 0v8l4-4z" /></svg></SmallButton>
              </ZoomRow>
            </ScopeColumn>
            <Gutter>
              <Grip aria-label="Свернуть диаграммы"><Side /><Dots /><Side /></Grip>
            </Gutter>
            <Panels>
              <Panel>
                <PanelButton $focus>Ускорение на холостых %</PanelButton>
                <Bars id="idle" values={[89, -14, 100, 80]} min={-100} step={50} left={1157} top={127} full={127} bottom={261} centers={common} />
              </Panel>
              <Panel>
                <PanelButton>Ускорение под нагрузкой %</PanelButton>
                <Bars id="load" values={[92, 69, 100, 90]} min={0} step={20} left={1157} top={127} full={127} bottom={260} centers={common} />
              </Panel>
              <Panel>
                <PanelButton>Относительная компрессия %</PanelButton>
                <Bars id="comp" values={[84, 84, 100, 92]} min={0} step={20} left={1154} top={127} full={132} bottom={258} centers={[1186, 1233, 1279, 1326]} />
              </Panel>
            </Panels>
          </Work>

          <Bottom>
            <Grip $flat aria-label="Свернуть настройки"><Down /><Dots $flat /><Down /></Grip>
            <Setup onSubmit={(e) => e.preventDefault()}>
              <Fields>
                <label htmlFor="sync">Синхро:</label>
                <Combo id="sync" w={202} value={"4.\u00a0 Датчик синхронизации"} />
                <label htmlFor="signal">Сигнал:</label>
                <Combo id="signal" w={202} value={"2.\u00a0 Датчик Полож Коленчатого Вал"} />
              </Fields>
              <Rule />
              <Phase>
                <label htmlFor="phase">Фаза</label>
                <Combo id="phase" w={202} value="Нет" />
              </Phase>
              <Rule />
              <Angle>
                <label htmlFor="angle">УОЗ</label>
                <Spinner id="angle" w={41} value="-1" label="УОЗ" />
                <span>60-2</span>
              </Angle>
              <Rule />
              <Marks>
                <Mark $c="#d00020">M1=0.26</Mark>
                <Mark $c="#0000c8">M2=24.08</Mark>
                <Mark $c="#800080">ΔM1=23.82</Mark>
              </Marks>
              <Analyse><svg width="10" height="18"><path d="M0 0l10 9-10 9z" fill="#00e000" stroke="#080" strokeWidth=".5" /></svg>Анализ</Analyse>
            </Setup>
          </Bottom>
          <Status><span>Демо версия</span><span /><span>1.9</span></Status>
        </Win>
      </Desktop>
    </>
  );
}
